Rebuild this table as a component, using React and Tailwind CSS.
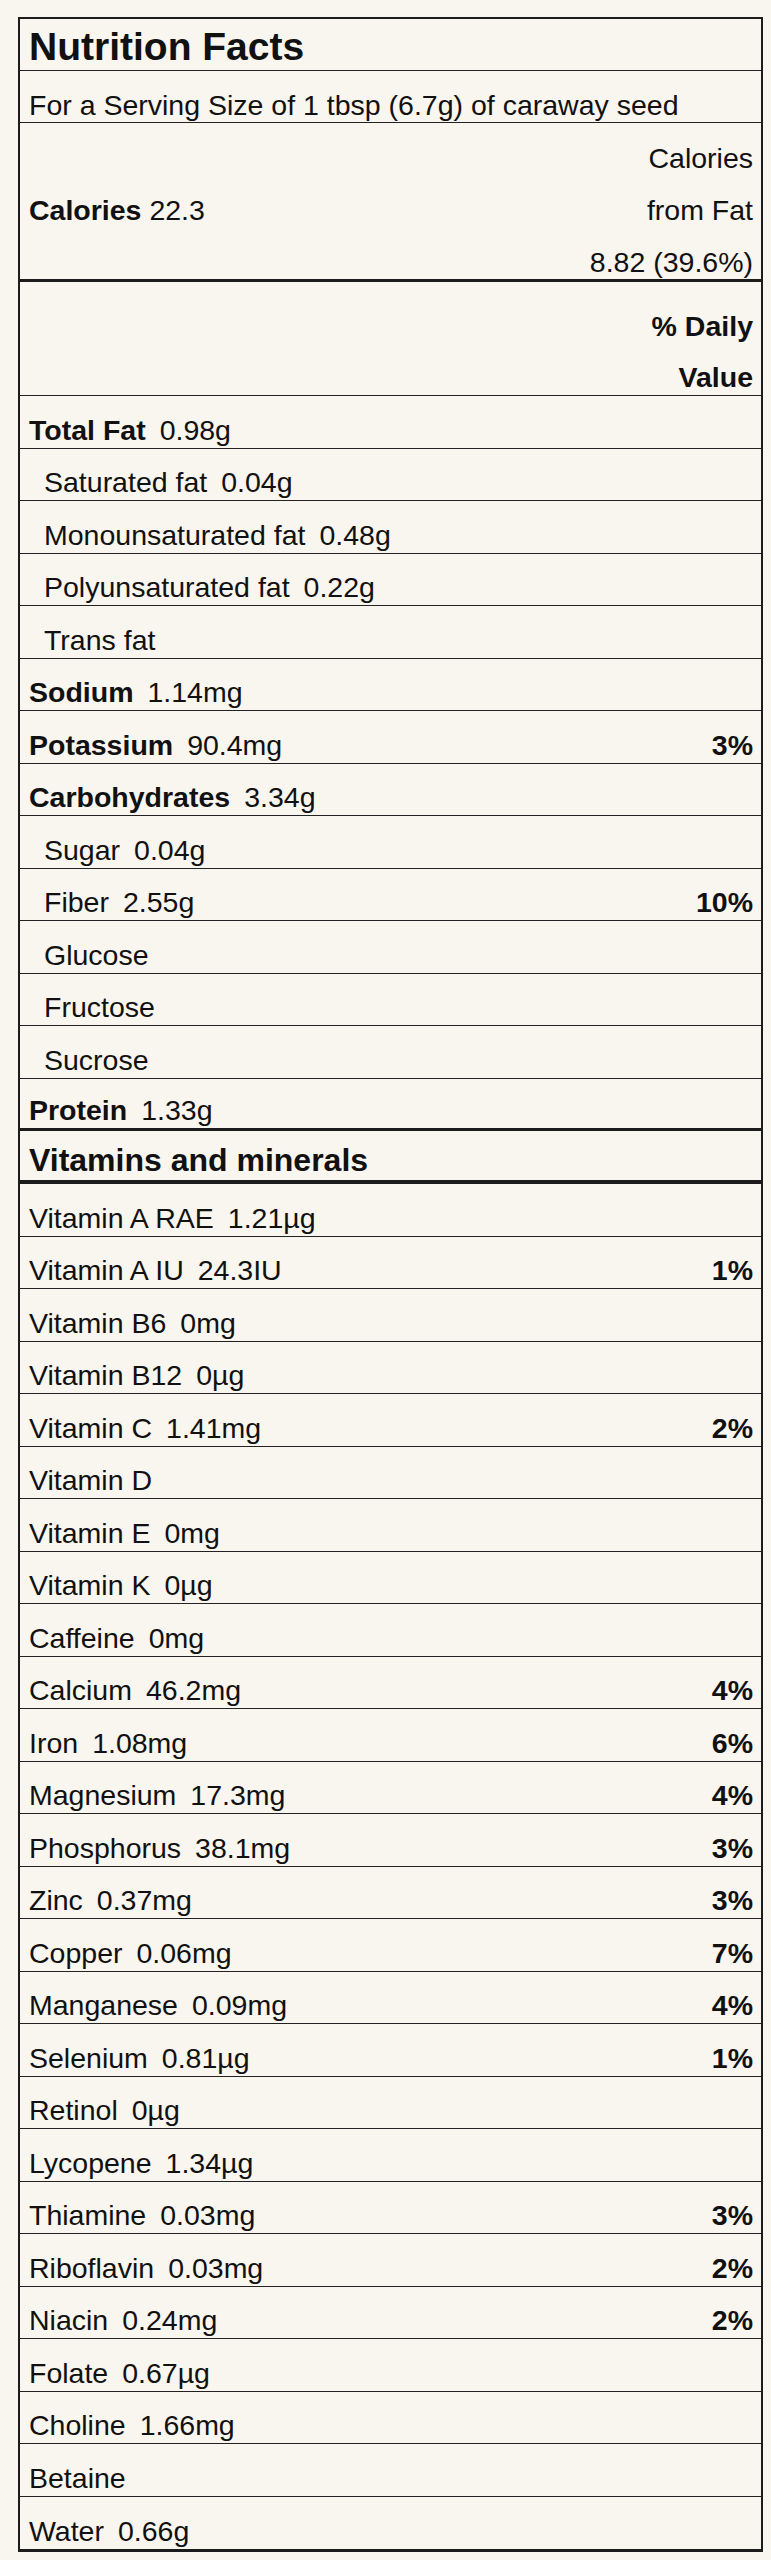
import React from "react";

const nutrients = [
  { label: "Total Fat", value: "0.98g", bold: true },
  { label: "Saturated fat", value: "0.04g", indent: true },
  { label: "Monounsaturated fat", value: "0.48g", indent: true },
  { label: "Polyunsaturated fat", value: "0.22g", indent: true },
  { label: "Trans fat", value: "", indent: true },
  { label: "Sodium", value: "1.14mg", bold: true },
  { label: "Potassium", value: "90.4mg", bold: true, dv: "3%" },
  { label: "Carbohydrates", value: "3.34g", bold: true },
  { label: "Sugar", value: "0.04g", indent: true },
  { label: "Fiber", value: "2.55g", indent: true, dv: "10%" },
  { label: "Glucose", value: "", indent: true },
  { label: "Fructose", value: "", indent: true },
  { label: "Sucrose", value: "", indent: true },
  { label: "Protein", value: "1.33g", bold: true, thick: true },
];

const vitamins = [
  { label: "Vitamin A RAE", value: "1.21µg" },
  { label: "Vitamin A IU", value: "24.3IU", dv: "1%" },
  { label: "Vitamin B6", value: "0mg" },
  { label: "Vitamin B12", value: "0µg" },
  { label: "Vitamin C", value: "1.41mg", dv: "2%" },
  { label: "Vitamin D", value: "" },
  { label: "Vitamin E", value: "0mg" },
  { label: "Vitamin K", value: "0µg" },
  { label: "Caffeine", value: "0mg" },
  { label: "Calcium", value: "46.2mg", dv: "4%" },
  { label: "Iron", value: "1.08mg", dv: "6%" },
  { label: "Magnesium", value: "17.3mg", dv: "4%" },
  { label: "Phosphorus", value: "38.1mg", dv: "3%" },
  { label: "Zinc", value: "0.37mg", dv: "3%" },
  { label: "Copper", value: "0.06mg", dv: "7%" },
  { label: "Manganese", value: "0.09mg", dv: "4%" },
  { label: "Selenium", value: "0.81µg", dv: "1%" },
  { label: "Retinol", value: "0µg" },
  { label: "Lycopene", value: "1.34µg" },
  { label: "Thiamine", value: "0.03mg", dv: "3%" },
  { label: "Riboflavin", value: "0.03mg", dv: "2%" },
  { label: "Niacin", value: "0.24mg", dv: "2%" },
  { label: "Folate", value: "0.67µg" },
  { label: "Choline", value: "1.66mg" },
  { label: "Betaine", value: "" },
  { label: "Water", value: "0.66g", last: true },
];

function Row({ item }) {
  const border = item.last
    ? ""
    : item.thick
    ? "border-b-[3px] border-[#1c1c1c]"
    : "border-b border-[#222]";
  return (
    <div
      className={`flex h-[52.5px] items-end justify-between pb-[2px] pr-[8px] leading-[32px] ${border} ${
        item.indent ? "pl-[24px]" : "pl-[9px]"
      }`}
    >
      <div className="whitespace-nowrap">
        <span className={item.bold ? "font-bold" : ""}>{item.label}</span>
        {item.value ? <span className="ml-[14px]">{item.value}</span> : null}
      </div>
      {item.dv ? <span className="font-bold">{item.dv}</span> : null}
    </div>
  );
}

export default function App() {
  return (
    <div
      className="min-h-[2560px] bg-[#f9f5ef] pt-[17px] text-[28.5px] text-[#111]"
      style={{ fontFamily: '"Liberation Sans", Arial, Helvetica, sans-serif' }}
    >
      <div className="ml-[18px] w-[745px] border-x-2 border-t-2 border-b-[3px] border-[#1c1c1c]">
        <div className="flex h-[52px] items-end border-b border-[#222] pb-[1px] pl-[9px] text-[39px] font-bold leading-[44px]">
          Nutrition Facts
        </div>
        <div className="flex h-[52px] items-end border-b border-[#222] pb-[1px] pl-[9px] leading-[32px]">
          For a Serving Size of 1 tbsp (6.7g) of caraway seed
        </div>
        <div className="flex h-[159px] justify-between border-b-[3px] border-[#1c1c1c] pl-[9px] pr-[8px] leading-[32px]">
          <div className="flex flex-col">
            <div className="h-[52px]" />
            <div className="flex h-[52px] items-end pb-[1px]">
              <span className="font-bold">Calories</span>&nbsp;22.3
            </div>
          </div>
          <div className="flex flex-col items-end">
            <div className="flex h-[52px] items-end pb-[1px]">Calories</div>
            <div className="flex h-[52px] items-end pb-[1px]">from Fat</div>
            <div className="flex h-[52px] items-end pb-[1px]">8.82 (39.6%)</div>
          </div>
        </div>
        <div className="flex h-[114px] flex-col items-end border-b border-[#222] pr-[8px] pt-[11px] font-bold leading-[32px]">
          <div className="flex h-[51px] items-end pb-[2px]">% Daily</div>
          <div className="flex h-[51px] items-end pb-[2px]">Value</div>
        </div>
        {nutrients.map((n) => (
          <Row key={n.label} item={n} />
        ))}
        <div className="flex h-[53px] items-end border-b-[4px] border-[#1c1c1c] pb-[2px] pl-[9px] text-[32px] font-bold leading-[36px]">
          Vitamins and minerals
        </div>
        {vitamins.map((n) => (
          <Row key={n.label} item={n} />
        ))}
      </div>
    </div>
  );
}
